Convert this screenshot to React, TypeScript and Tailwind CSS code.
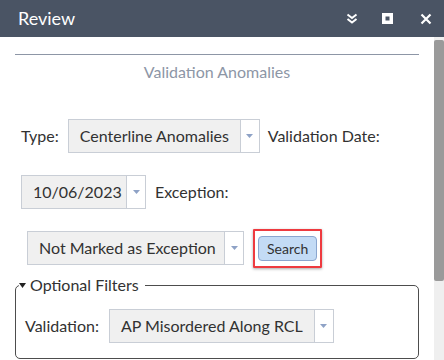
import * as React from "react";

const font = { fontFamily: "Lato, 'Noto Sans', sans-serif" };

function Select({ value, width }: { value: string; width: string }) {
  return (
    <div className={`flex h-[34px] shrink-0 ${width} border border-[#c9ced6] bg-[#f0f0f0]`}>
      <div className="flex flex-1 items-center whitespace-nowrap pl-[11px] text-[16px] text-[#323232]">{value}</div>
      <div className="flex w-[19px] items-center justify-center border-l border-[#c9ced6] bg-white">
        <svg width="7" height="4" viewBox="0 0 7 4">
          <path d="M0 0h7L3.5 4z" fill="#8ea2c6" />
        </svg>
      </div>
    </div>
  );
}

export default function App() {
  return (
    <div className="flex h-[360px] w-[444px] flex-col overflow-hidden bg-white" style={font}>
      <div className="flex h-[37px] shrink-0 items-center bg-[#4a5464] pl-[18px] pr-[12px] text-white">
        <span className="text-[18px]">Review</span>
        <div className="ml-auto flex items-center">
          <svg width="12" height="12" viewBox="0 0 12 12" className="mr-[24px]">
            <path d="M1.5 1.5 6 5l4.5-3.5M1.5 6 6 9.5 10.5 6" stroke="white" strokeWidth="2" fill="none" />
          </svg>
          <svg width="11" height="11" viewBox="0 0 11 11" className="mr-[27px]">
            <rect x="0" y="0" width="11" height="11" fill="white" />
            <rect x="3.5" y="3.5" width="4" height="4" fill="#4a5464" />
          </svg>
          <svg width="12" height="12" viewBox="0 0 12 12">
            <path d="M1.5 1.5l9 9M10.5 1.5l-9 9" stroke="white" strokeWidth="2.2" />
          </svg>
        </div>
      </div>
      <div className="flex flex-1">
        <div className="flex-1 pl-[15px] pr-[15px]">
          <div className="mt-[17px] h-[1px] bg-[#8d96a6]" />
          <div className="mt-[5px] text-center text-[16px] leading-[24px] text-[#8d96a6]">Validation Anomalies</div>
          <div className="mt-[35px] flex h-[34px] items-center whitespace-nowrap pl-[6px] text-[16px] text-[#323232]">
            <span className="mr-[9px]">Type:</span>
            <Select value="Centerline Anomalies" width="w-[192px]" />
            <span className="ml-[8px]">Validation Date:</span>
          </div>
          <div className="mt-[22px] flex h-[34px] items-center whitespace-nowrap pl-[6px] text-[16px] text-[#323232]">
            <Select value="10/06/2023" width="w-[125px]" />
            <span className="ml-[9px]">Exception:</span>
          </div>
          <div className="mt-[22px] flex h-[34px] items-center whitespace-nowrap pl-[12px] text-[16px] text-[#323232]">
            <Select value="Not Marked as Exception" width="w-[217px]" />
            <div className="ml-[9px] shrink-0 rounded-[1px] border-2 border-[#ee3a3f] px-[3px] py-[5px] shadow-[0_1px_3px_rgba(0,0,0,0.35)]">
              <button className="flex h-[25px] items-center rounded-[4px] border border-[#8aa6cf] bg-[#c3dbf5] px-[8px] text-[14px] text-[#323232]">
                Search
              </button>
            </div>
          </div>
          <fieldset className="mt-[8px] rounded-[5px] border border-[#4d4d4d] px-[9px] pb-[15px] pt-[12px]">
            <legend className="-ml-[6px] flex items-center pr-[6px] text-[16px] leading-[24px] text-[#323232]">
              <svg width="7" height="5" viewBox="0 0 7 5" className="mr-[4px]">
                <path d="M0 0h7L3.5 5z" fill="#222" />
              </svg>
              Optional Filters
            </legend>
            <div className="flex items-center whitespace-nowrap text-[16px] text-[#323232]">
              <span className="mr-[10px]">Validation:</span>
              <Select value="AP Misordered Along RCL" width="w-[225px]" />
            </div>
          </fieldset>
        </div>
        <div className="w-[10px] shrink-0 bg-[#efefef] pt-[3px]">
          <div className="h-[241px] rounded-[2px] bg-[#9a9a9a]" />
        </div>
      </div>
    </div>
  );
}
